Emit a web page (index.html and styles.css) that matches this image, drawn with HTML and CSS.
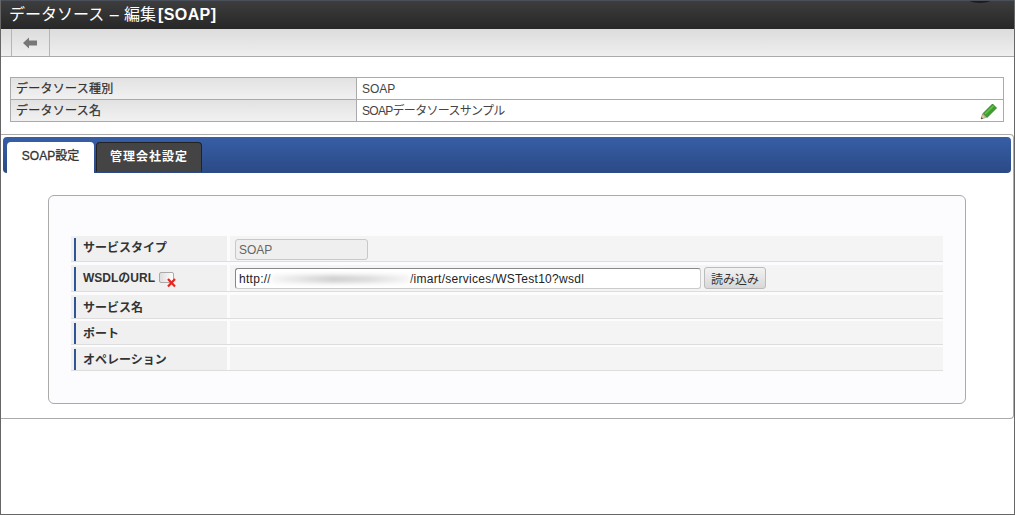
FILE: index.html
```html
<!DOCTYPE html>
<html lang="ja">
<head>
<meta charset="utf-8">
<title>データソース – 編集[SOAP]</title>
<link rel="stylesheet" href="styles.css">
</head>
<body>
<div class="window">
  <header class="titlebar"><h1 class="title">データソース – 編集<b>[SOAP]</b></h1><span class="user-badge"></span></header>
  <nav class="toolbar">
    <button class="back" type="button" aria-label="戻る">
      <svg width="14" height="12" viewBox="0 0 14 12"><path d="M0 6 6 .5V3.500H14V8.500H6V11.500Z" fill="#777"/></svg>
    </button>
  </nav>
  <section class="summary">
    <div class="sum-label">データソース種別</div>
    <div class="sum-value">SOAP</div>
    <div class="sum-label">データソース名</div>
    <div class="sum-value tight">SOAPデータソースサンプル
      <svg class="pencil" width="17" height="17" viewBox="0 0 17 17">
        <path d="M1 16 2.500 11 5.800 14.500Z" fill="#e0cfa8" stroke="#8a7a5c" stroke-width=".6"/>
        <path d="M1 16 1.600 14 3 15.400Z" fill="#444"/>
        <path d="M3 10.500 12.500 1 16.500 5 7 14.500Z" fill="#3f9f2f" stroke="#26781e" stroke-width=".8"/>
        <path d="M4.500 10.500 13 2.200 14 3.200 5.500 11.500Z" fill="#6cc24f"/>
      </svg>
    </div>
  </section>
  <section class="panel">
    <div class="tabs">
      <div class="tab tab-active">SOAP設定</div>
      <div class="tab tab-idle">管理会社設定</div>
    </div>
    <div class="box">
      <div class="form">
        <div class="row r1">
          <div class="label"><span class="name raised">サービスタイプ</span></div>
          <div class="value"><div class="readonly">SOAP</div></div>
        </div>
        <div class="row r2">
          <div class="label"><span class="name raised">WSDLのURL</span>
            <svg class="doc" width="18" height="16" viewBox="0 0 18 16">
              <defs><linearGradient id="docfill"><stop offset="0" stop-color="#ddd"/><stop offset="1" stop-color="#fff"/></linearGradient></defs>
              <rect x=".5" y=".5" width="14" height="10" rx="1.500" fill="url(#docfill)" stroke="#aaa"/>
              <path d="M9 7 16 14.500M16 7 9 14.500" stroke="#e8261c" stroke-width="2.200"/>
            </svg>
          </div>
          <div class="value">
            <div class="urlbox"><span>http://</span><span class="masked"></span><span>/imart/services/WSTest10?wsdl</span></div>
            <button class="load" type="button">読み込み</button>
          </div>
        </div>
        <div class="row r3"><div class="label"><span class="name">サービス名</span></div><div class="value"></div></div>
        <div class="row r4"><div class="label"><span class="name">ポート</span></div><div class="value"></div></div>
        <div class="row r5"><div class="label"><span class="name">オペレーション</span></div><div class="value"></div></div>
      </div>
    </div>
  </section>
</div>
</body>
</html>
```
FILE: styles.css
```css
* { box-sizing: border-box; }
html, body { margin: 0; padding: 0; background: #fff; }
body {
  font-family: "Liberation Sans", "Noto Sans CJK JP", sans-serif;
  font-size: 12px;
  color: #333;
  overflow: hidden;
}
.window {
  height: 515px;
  border: 1px solid #666;
  border-top: 0;
  background: #fff;
  overflow: hidden;
}
.titlebar {
  height: 29px;
  margin: 0 -1px;
  border-top: 1px solid #4a4f5c;
  background: linear-gradient(#3d3d3d, #272727);
  padding-left: 9px;
  position: relative;
  overflow: hidden;
}
.title {
  margin: 0;
  font-size: 16px;
  font-weight: 400;
  word-spacing: 1px;
  line-height: 28px;
  color: #fff;
}
.title b { font-weight: 700; margin-left: 2px; letter-spacing: .4px; }
.user-badge {
  position: absolute;
  right: 5px;
  top: -58px;
  width: 60px;
  height: 60px;
  border-radius: 50%;
  background: #1c1c1c;
}
.toolbar {
  height: 28px;
  border-bottom: 1px solid #aaa;
  background: linear-gradient(#dcdcdc, #efefef);
  padding-left: 10px;
  display: flex;
}
.back {
  width: 39px;
  height: 27px;
  padding: 0 2px 0 0;
  border: 0;
  border-left: 1px solid #b5b5b5;
  border-right: 1px solid #b5b5b5;
  background: transparent;
  display: flex;
  align-items: center;
  justify-content: center;
}
.summary {
  margin: 20px 10px 0 9px;
  height: 45px;
  display: grid;
  grid-template-columns: 346px 1fr;
  grid-template-rows: 22px 21px;
  border: 1px solid #aaa;
  font-size: 12px;
}
.sum-label {
  background: linear-gradient(#e2e2e2, #f1f1f1);
  border-right: 1px solid #aaa;
  padding: 1px 0 0 5px;
  line-height: 21px;
  font-size: 12px;
  letter-spacing: .25px;
  -webkit-text-stroke: .25px #333;
  color: #333;
}
.sum-value {
  padding: 1px 0 0 5px;
  line-height: 21px;
  position: relative;
  color: #444;
}
.tight { letter-spacing: -.7px; }
.sum-label:nth-child(1), .sum-value:nth-child(2) { border-bottom: 1px solid #aaa; }
.pencil { position: absolute; right: 6px; top: 3px; }
.panel {
  margin-top: 12px;
  height: 285px;
  border: 1px solid #aaa;
  border-left: 0;
  border-radius: 0 4px 4px 0;
  padding-top: 2px;
}
.tabs {
  margin: 0 2px 0 2px;
  height: 36px;
  border-radius: 4px;
  background: linear-gradient(#375ea6, #2b4a85);
  padding: 5px 0 0 4px;
  display: flex;
  gap: 2px;
  align-items: flex-start;
}
.tab {
  border-radius: 4px 4px 0 0;
  font-weight: 700;
  text-align: center;
  font-size: 12px;
  line-height: 29px;
}
.tab-active {
  width: 87px;
  height: 31px;
  background: #fff;
  color: #333;
  font-weight: 400;
  -webkit-text-stroke: .3px #333;
}
.tab-idle {
  width: 106px;
  height: 30px;
  background: #444;
  border: 1px solid #222;
  border-bottom-color: #444;
  color: #fff;
  letter-spacing: 1px;
  line-height: 28px;
}
.box {
  margin: 22px 47px 0 47px;
  height: 209px;
  border: 1px solid #aaa;
  border-radius: 6px;
  background: #fcfcff;
  padding: 40px 22px 0 22px;
}
.row {
  display: grid;
  grid-template-columns: 156px 1fr;
  column-gap: 3px;
  border-bottom: 1px solid #ddd;
}
.r1 { height: 26px; margin-bottom: 3px; }
.r2 { height: 27px; margin-bottom: 3px; }
.r3 { height: 24px; margin-bottom: 2px; }
.r4 { height: 24px; margin-bottom: 2px; }
.r5 { height: 24px; }
.label {
  background: #f0f0f0;
  display: flex;
  align-items: center;
  gap: 4px;
  position: relative;
  padding: 0 0 0 12px;
  font-weight: 700;
  font-size: 12px;
  color: #333;
}
.label::before {
  content: "";
  position: absolute;
  left: 3px;
  top: 2px;
  bottom: 0;
  width: 2px;
  background: #2f5597;
}
.name { position: relative; }
.raised { top: -2px; }
.doc { margin-top: 4px; }
.value {
  background: #f4f4f4;
  display: flex;
  align-items: center;
  padding-left: 5px;
  gap: 3px;
}
.r1 .value { padding-top: 2px; }
.readonly {
  width: 133px;
  height: 21px;
  border: 1px solid #c8c8c8;
  border-radius: 3px;
  background: #efefef;
  color: #666;
  padding-left: 3px;
  line-height: 20px;
}
.urlbox {
  width: 466px;
  height: 21px;
  border: 1px solid #888;
  border-bottom-color: #ccc;
  border-right-color: #ccc;
  border-radius: 3px;
  background: #fff;
  color: #222;
  padding-left: 3px;
  line-height: 20px;
  letter-spacing: .28px;
  display: flex;
  overflow: hidden;
}
.masked {
  width: 139px;
  height: 8px;
  margin: 6px 0 0;
  background: linear-gradient(90deg, #f6f6f6, #cfcfcf 45%, #dcdcdc 70%, #f6f6f6);
  filter: blur(2px);
}
.load {
  width: 62px;
  height: 22px;
  padding: 0;
  border: 1px solid #bbb;
  border-radius: 3px;
  background: linear-gradient(#f2f2f2, #d8d8d8);
  font: inherit;
  color: #333;
}
```
